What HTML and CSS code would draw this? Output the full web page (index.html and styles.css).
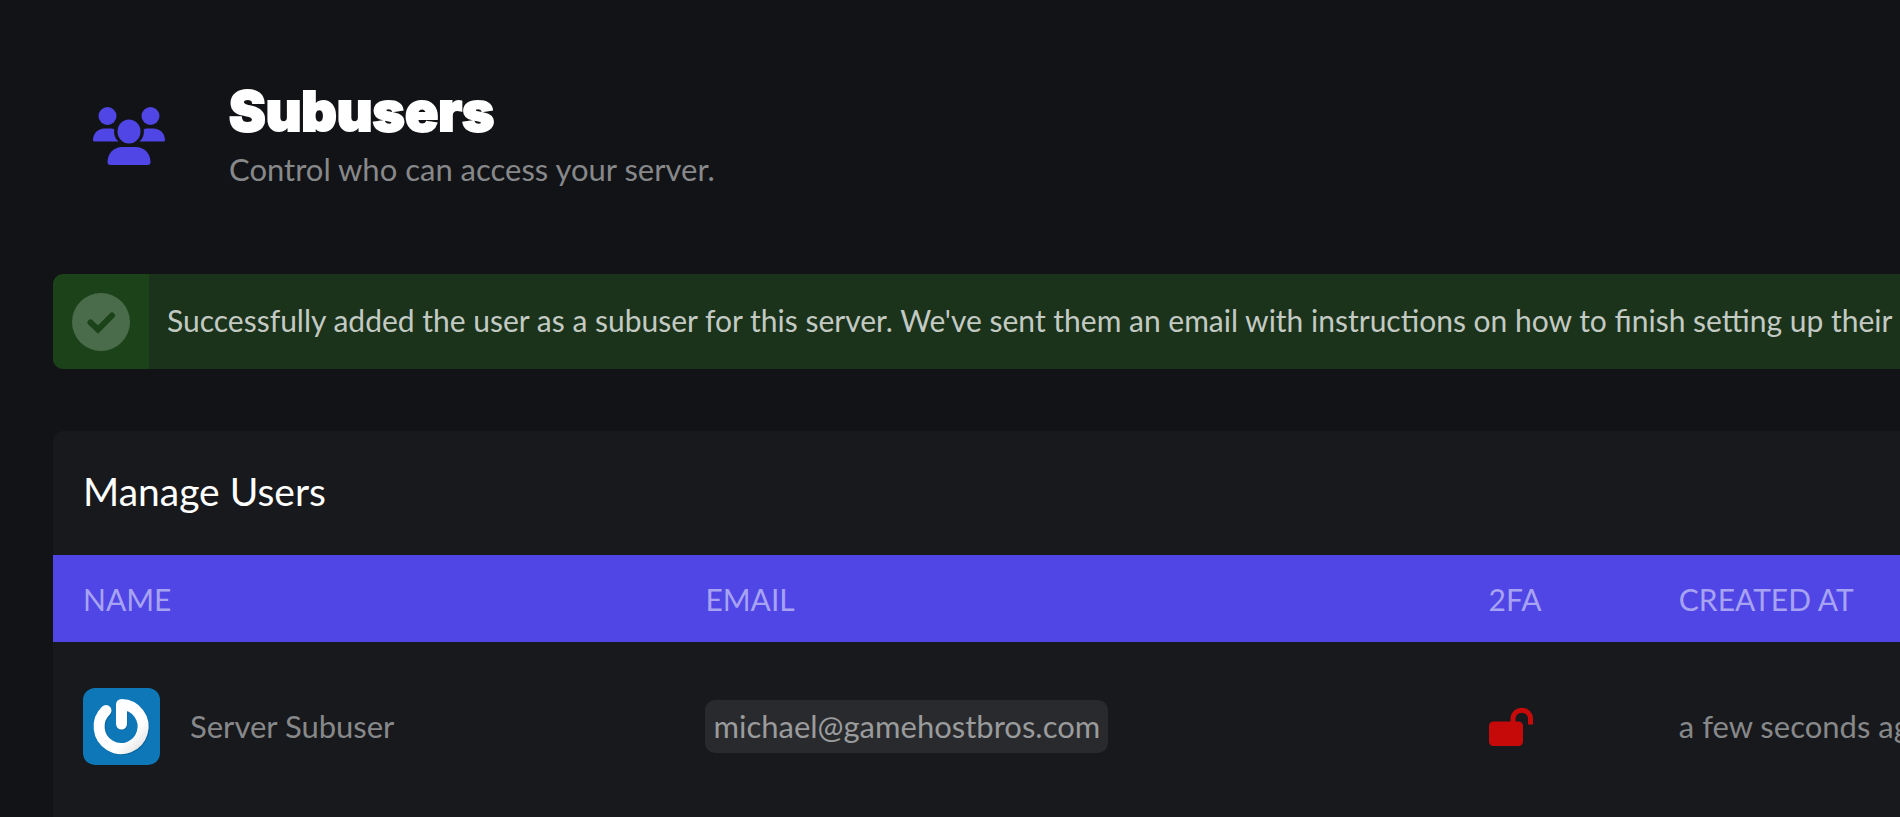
FILE: index.html
```html
<!DOCTYPE html>
<html lang="en">
<head>
<meta charset="utf-8">
<title>Subusers</title>
<link rel="stylesheet" href="styles.css">
</head>
<body>
<main class="page">
  <header class="page-header">
    <svg class="page-icon" viewBox="0 0 72 58" aria-hidden="true">
      <circle cx="14.500" cy="9" r="9"/>
      <circle cx="57.500" cy="9" r="9"/>
      <ellipse cx="36" cy="24.500" rx="11.500" ry="12"/>
      <path d="M0 33C0 26.500 5 21.500 11.500 21.500H18C19.300 21.500 20.300 21.700 21.300 22.200C20.500 27 22 31.500 25.500 34.500H1.500Q0 34.500 0 33Z"/>
      <path d="M72 33C72 26.500 67 21.500 60.500 21.500H54C52.700 21.500 51.700 21.700 50.700 22.200C51.500 27 50 31.500 46.500 34.500H70.500Q72 34.500 72 33Z"/>
      <path d="M14.500 55C14.500 46.500 21 40 29 40H43C51 40 57.500 46.500 57.500 55Q57.500 58 54.500 58H17.500Q14.500 58 14.500 55Z"/>
    </svg>
    <div class="page-heading">
      <h1 class="page-title">Subusers</h1>
      <p class="page-subtitle">Control who can access your server.</p>
    </div>
  </header>

  <div class="alert" role="status">
    <div class="alert-badge">
      <svg class="alert-icon" viewBox="0 0 58 58" aria-hidden="true">
        <circle cx="29" cy="29" r="29"/>
        <path d="M18.500 29.500L26 36.500L40 22.500"/>
      </svg>
    </div>
    <p class="alert-text">Successfully added the user as a subuser for this server. We've sent them an email with instructions on how to finish setting up their account.</p>
  </div>

  <section class="card" aria-labelledby="manage-users">
    <h2 class="card-title" id="manage-users">Manage Users</h2>
    <table class="users">
      <colgroup>
        <col class="col-name">
        <col class="col-email">
        <col class="col-2fa">
        <col class="col-created">
      </colgroup>
      <thead>
        <tr>
          <th scope="col">NAME</th>
          <th scope="col">EMAIL</th>
          <th scope="col">2FA</th>
          <th scope="col">CREATED AT</th>
        </tr>
      </thead>
      <tbody>
        <tr>
          <td>
            <div class="user">
              <svg class="avatar" viewBox="0 0 77 77" aria-hidden="true">
                <defs>
                  <linearGradient id="metal" x1="0" y1="0" x2="1" y2="1">
                    <stop offset="0.700" stop-color="#ffffff"/>
                    <stop offset="1" stop-color="#e4e4e4"/>
                  </linearGradient>
                </defs>
                <rect width="77" height="77" fill="#0e77b7"/>
                <path class="avatar-shade" d="M24 23.500A22 22 0 1 0 39 17.500V37"/>
                <path class="avatar-mark" d="M23 22.500A22 22 0 1 0 38.500 16.500V36"/>
              </svg>
              <span>Server Subuser</span>
            </div>
          </td>
          <td><code class="email">michael@gamehostbros.com</code></td>
          <td>
            <svg class="lock" viewBox="0 0 44 39" role="img" aria-label="Two-factor authentication disabled">
              <rect x="0" y="14.500" width="34" height="24.500" rx="4.500"/>
              <path d="M24 16V11A8.800 8.800 0 0 1 41.500 11V17.500"/>
            </svg>
          </td>
          <td>a few seconds ago</td>
        </tr>
      </tbody>
    </table>
  </section>
</main>
</body>
</html>
```
FILE: styles.css
```css
* {
  box-sizing: border-box;
}

body {
  margin: 0;
  min-height: 100vh;
  background: #121316;
  color: #87888a;
  font-family: Lato, "Liberation Sans", sans-serif;
  font-size: 31px;
  line-height: 40px;
  overflow: hidden;
}

h1, h2, p {
  margin: 0;
}

.page {
  display: flex;
  flex-direction: column;
  min-height: 100vh;
  padding: 83px 0 0 53px;
}

.page-header {
  display: flex;
  align-items: center;
  gap: 64px;
  padding-left: 40px;
  margin-bottom: 85px;
}

.page-icon {
  width: 72px;
  height: 58px;
  fill: #4f46e5;
}

.page-title {
  color: #fff;
  font-family: Inter, sans-serif;
  font-size: 55px;
  font-weight: 900;
  line-height: 56px;
  margin-bottom: 10px;
  -webkit-text-stroke: 2px #fff;
}

.alert {
  display: flex;
  height: 95px;
  margin-bottom: 62px;
  background: #1b321b;
  border-radius: 10px 0 0 10px;
  overflow: hidden;
}

.alert-badge {
  display: flex;
  flex: none;
  align-items: center;
  padding: 0 19px;
  background: #1b4219;
}

.alert-icon {
  width: 58px;
  height: 58px;
  fill: #4b6c4a;
}

.alert-icon path {
  fill: none;
  stroke: #1b4219;
  stroke-width: 6;
  stroke-linecap: round;
}

.alert-text {
  align-self: center;
  padding: 0 0 4px 18px;
  color: #c3cac3;
  font-size: 30px;
  white-space: nowrap;
}

.card {
  flex: 1;
  background: #18191c;
  border-radius: 10px 0 0 0;
}

.card-title {
  padding: 36px 30px 40px;
  color: #fff;
  font-size: 39px;
  font-weight: 400;
  line-height: 48px;
}

.users {
  width: 100%;
  table-layout: fixed;
  border-collapse: collapse;
}

.col-name { width: 33.7%; }
.col-email { width: 42.4%; }
.col-2fa { width: 10.3%; }

.users th,
.users td {
  padding: 0 0 0 30px;
  text-align: left;
  font-weight: 400;
  white-space: nowrap;
}

.users th {
  height: 87px;
  background: #4f46e5;
  color: #a7a2f2;
  font-size: 30px;
}

.users td {
  height: 168px;
}

.user {
  display: flex;
  align-items: center;
  gap: 30px;
}

.avatar {
  width: 77px;
  height: 77px;
  border-radius: 12px;
}

.avatar path {
  fill: none;
  stroke-width: 11;
  stroke-linecap: round;
  stroke-linejoin: round;
}

.avatar-shade { stroke: #0a66a0; }
.avatar .avatar-mark { stroke: url(#metal); }

.email {
  display: inline-block;
  padding: 6px 8px 7px;
  background: #292a2d;
  border-radius: 10px;
  color: #9a9b9c;
  font-family: inherit;
  font-size: inherit;
}

.lock {
  display: block;
  width: 44px;
  height: 39px;
  fill: #c60a0a;
}

.lock path {
  fill: none;
  stroke: #c60a0a;
  stroke-width: 5;
}
```
